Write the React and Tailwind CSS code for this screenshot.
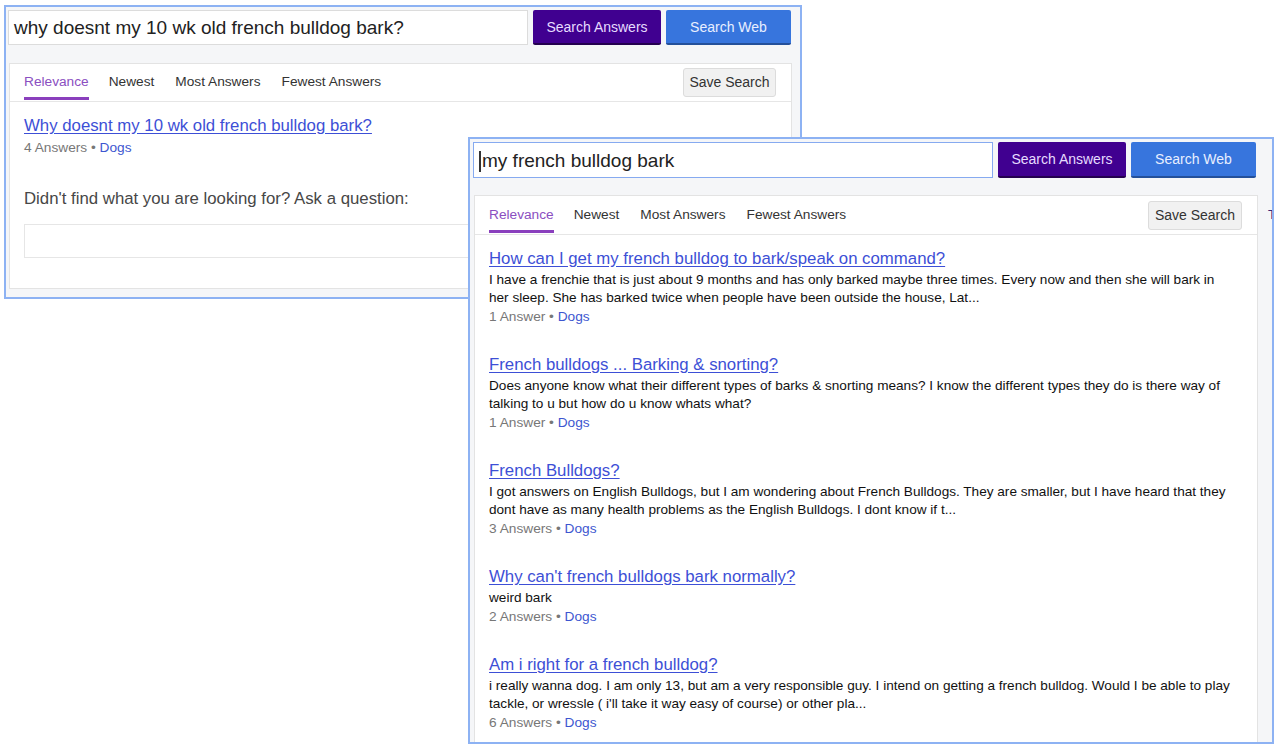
import React from "react";

const font = "font-['Liberation_Sans',Arial,sans-serif]";

function Buttons({ h }) {
  return (
    <>
      <button className={`${h} w-[128px] ml-[5px] shrink-0 rounded-[2px] bg-[#400090] border-b-2 border-[#24004f] pt-[1px] text-[14px] text-[#e6dcff]`}>
        Search Answers
      </button>
      <button className={`${h} w-[125px] ml-[5px] shrink-0 rounded-[2px] bg-[#3775dd] border-b-2 border-[#24509a] pt-[1px] text-[14px] text-[#e8efff]`}>
        Search Web
      </button>
    </>
  );
}

function Tabs({ saveW }) {
  return (
    <div className="flex items-center h-[38px] border-b border-[#e6e6e6] pl-[14px] pr-[15px]">
      <div className="relative h-full flex items-center text-[13.7px] text-[#8b4fc1]">
        Relevance
        <span className="absolute left-0 right-0 bottom-[1px] h-[3px] bg-[#8a3fbd]" />
      </div>
      <div className="ml-[20px] text-[13.7px] text-[#333]">Newest</div>
      <div className="ml-[21px] text-[13.7px] text-[#333]">Most Answers</div>
      <div className="ml-[21px] text-[13.7px] text-[#333]">Fewest Answers</div>
      <div className="flex-1" />
      <button className={`${saveW} h-[29px] rounded-[3px] border border-[#dcdcdc] bg-[#f1f1f1] text-[14px] text-[#333]`}>
        Save Search
      </button>
    </div>
  );
}

const results = [
  {
    t: "How can I get my french bulldog to bark/speak on command?",
    d: [
      "I have a frenchie that is just about 9 months and has only barked maybe three times. Every now and then she will bark in",
      "her sleep. She has barked twice when people have been outside the house, Lat...",
    ],
    m: "1 Answer",
  },
  {
    t: "French bulldogs ... Barking & snorting?",
    d: [
      "Does anyone know what their different types of barks & snorting means? I know the different types they do is there way of",
      "talking to u but how do u know whats what?",
    ],
    m: "1 Answer",
  },
  {
    t: "French Bulldogs?",
    d: [
      "I got answers on English Bulldogs, but I am wondering about French Bulldogs. They are smaller, but I have heard that they",
      "dont have as many health problems as the English Bulldogs. I dont know if t...",
    ],
    m: "3 Answers",
  },
  {
    t: "Why can't french bulldogs bark normally?",
    d: ["weird bark"],
    m: "2 Answers",
  },
  {
    t: "Am i right for a french bulldog?",
    d: [
      "i really wanna dog. I am only 13, but am a very responsible guy. I intend on getting a french bulldog. Would I be able to play",
      "tackle, or wressle ( i'll take it way easy of course) or other pla...",
    ],
    m: "6 Answers",
  },
];

export default function App() {
  return (
    <div className={`relative w-[1288px] h-[750px] bg-white overflow-hidden ${font}`}>
      {/* Window 1 */}
      <div className="absolute left-[4px] top-[5px] w-[798px] h-[294px] border-2 border-[#8db2f3] bg-[#f5f6f8] overflow-hidden">
        <div className="flex mt-[3px] ml-[2px]">
          <div className="w-[520px] h-[35px] shrink-0 border border-[#dcdcdc] bg-white flex items-center pl-[5px] pt-[2px] text-[19px] text-[#222]">
            why doesnt my 10 wk old french bulldog bark?
          </div>
          <Buttons h="h-[35px]" />
        </div>
        <div className="ml-[3px] mt-[18px] w-[783px] h-[226px] border border-[#e3e3e3] bg-white">
          <Tabs saveW="w-[93px]" />
          <div className="pl-[14px] pt-[13px]">
            <div className="leading-[22px] text-[16.8px] text-[#3d4fd6] underline underline-offset-[2px]">
              Why doesnt my 10 wk old french bulldog bark?
            </div>
            <div className="mt-[2px] leading-[18px] text-[13.7px] text-[#777]">
              4 Answers • <span className="text-[#3d56d0]">Dogs</span>
            </div>
            <div className="mt-[32px] leading-[20px] text-[16.8px] text-[#474747]">
              Didn't find what you are looking for? Ask a question:
            </div>
            <div className="mt-[15px] w-[751px] h-[34px] border border-[#e6e6e6] bg-white" />
          </div>
        </div>
      </div>

      {/* Window 2 */}
      <div className="absolute left-[468px] top-[137px] w-[806px] h-[607px] border-2 border-[#8db2f3] bg-[#f5f6f8] overflow-hidden">
        <div className="flex mt-[3px] ml-[3px]">
          <div className="w-[520px] h-[36px] shrink-0 border border-[#86aaf0] bg-white flex items-center pl-[5px] pt-[2px] text-[19px] text-[#222]">
            <span className="h-[21px] border-l-2 border-[#333] mr-[1px]" />
            my french bulldog bark
          </div>
          <Buttons h="h-[36px]" />
        </div>
        <div className="relative">
          <div className="ml-[4px] mt-[17px] w-[784px] h-[560px] border border-[#e3e3e3] bg-white">
            <div className="pt-[1px]">
              <Tabs saveW="w-[94px]" />
            </div>
            <div className="pl-[14px] pt-[13px]">
              {results.map((r, i) => (
                <div key={i} className={i > 0 ? "mt-[28px]" : ""}>
                  <div className="leading-[22px] text-[16.8px] text-[#3d4fd6] underline underline-offset-[2px]">
                    {r.t}
                  </div>
                  <div className="mt-[1px] text-[13.6px] leading-[18px] text-[#111]">
                    {r.d.map((l, j) => (
                      <div key={j}>{l}</div>
                    ))}
                  </div>
                  <div className="mt-[1px] leading-[18px] text-[13.7px] text-[#777]">
                    {r.m} • <span className="text-[#3d56d0]">Dogs</span>
                  </div>
                </div>
              ))}
            </div>
          </div>
          <span className="absolute left-[798px] top-[10px] text-[13px] text-[#3a2a7a]">T</span>
        </div>
      </div>
    </div>
  );
}
